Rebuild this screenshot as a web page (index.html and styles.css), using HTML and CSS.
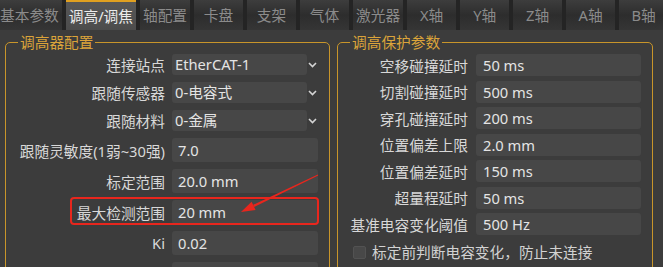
FILE: index.html
```html
<!DOCTYPE html>
<html lang="zh-CN">
<head>
    <meta charset="UTF-8">
    <meta name="viewport" content="width=device-width, initial-scale=1.0">
    <title>调高/调焦</title>
    <link rel="stylesheet" href="styles.css">
</head>
<body>

<div class="tabs">
    <div class="tab">基本参数</div>
    <div class="tab active">调高/调焦</div>
    <div class="tab">轴配置</div>
    <div class="tab">卡盘</div>
    <div class="tab">支架</div>
    <div class="tab">气体</div>
    <div class="tab">激光器</div>
    <div class="tab">X轴</div>
    <div class="tab">Y轴</div>
    <div class="tab">Z轴</div>
    <div class="tab">A轴</div>
    <div class="tab">B轴</div>
</div>

<div class="panels">
    <fieldset class="group group-left">
        <legend>调高器配置</legend>
        <div class="form form-left">
            <div class="row">
                <label>连接站点</label>
                <div class="combo">
                    <span class="combo-field">EtherCAT-1</span>
                    <svg class="chevron" width="11" height="21" viewBox="0 0 11 21"><path d="M2 9 L5.5 12.5 L9 9" fill="none" stroke="#d4d4d4" stroke-width="1.6"/></svg>
                </div>
            </div>
            <div class="row">
                <label>跟随传感器</label>
                <div class="combo">
                    <span class="combo-field">0-电容式</span>
                    <svg class="chevron" width="11" height="21" viewBox="0 0 11 21"><path d="M2 9 L5.5 12.5 L9 9" fill="none" stroke="#d4d4d4" stroke-width="1.6"/></svg>
                </div>
            </div>
            <div class="row">
                <label>跟随材料</label>
                <div class="combo">
                    <span class="combo-field">0-金属</span>
                    <svg class="chevron" width="11" height="21" viewBox="0 0 11 21"><path d="M2 9 L5.5 12.5 L9 9" fill="none" stroke="#d4d4d4" stroke-width="1.6"/></svg>
                </div>
            </div>
            <div class="row">
                <label>跟随灵敏度(1弱~30强)</label>
                <div class="field">7.0</div>
            </div>
            <div class="row">
                <label>标定范围</label>
                <div class="field">20.0 mm</div>
            </div>
            <div class="row">
                <label>最大检测范围</label>
                <div class="field">20 mm</div>
                <span class="highlight"></span>
            </div>
            <div class="row">
                <label>Ki</label>
                <div class="field">0.02</div>
            </div>
            <div class="row">
                <label></label>
                <div class="field"></div>
            </div>
        </div>
    </fieldset>

    <fieldset class="group group-right">
        <legend>调高保护参数</legend>
        <div class="form form-right">
            <div class="row"><label>空移碰撞延时</label><div class="field">50 ms</div></div>
            <div class="row"><label>切割碰撞延时</label><div class="field">500 ms</div></div>
            <div class="row"><label>穿孔碰撞延时</label><div class="field">200 ms</div></div>
            <div class="row"><label>位置偏差上限</label><div class="field">2.0 mm</div></div>
            <div class="row"><label>位置偏差延时</label><div class="field">150 ms</div></div>
            <div class="row"><label>超量程延时</label><div class="field">50 ms</div></div>
            <div class="row"><label>基准电容变化阈值</label><div class="field">500 Hz</div></div>
        </div>
        <div class="check">
            <span class="check-box"></span>
            <span>标定前判断电容变化，防止未连接</span>
        </div>
    </fieldset>
</div>

<svg class="arrow" width="663" height="267" viewBox="0 0 663 267">
    <polygon points="254.1,207.0 253.1,204.8 317.8,174.6 318.2,175.4" fill="#e8261d"/>
    <polygon points="241,212 251.6,201.8 255.6,210.0" fill="#e8261d"/>
</svg>

</body>
</html>
```

FILE: styles.css
```css
body {
    margin: 0;
    height: 267px;
    overflow: hidden;
    background-color: #3c3c3c;
    font-family: "Noto Sans", "Noto Sans CJK SC", sans-serif;
    font-size: 14.7px;
    color: #d8d8d8;
}
.tabs {
    display: flex;
    gap: 4px;
    height: 30px;
    margin-left: -3px;
    background-color: #242424;
    overflow: hidden;
}
.tab {
    flex: none;
    box-sizing: border-box;
    min-width: 49px;
    padding: 0 3px;
    line-height: 30px;
    text-align: center;
    white-space: nowrap;
    color: #8b8b8b;
    background: linear-gradient(to bottom, #3d3d3d, #2d2d2d 50%, #353535);
}
.tab.active {
    color: #ececec;
    line-height: 28px;
    border-top: 2px solid #e0a020;
    background: linear-gradient(to bottom, #575757, #4c4c4c);
}
.panels {
    display: flex;
    gap: 7px;
    padding: 2px 0 0 5px;
}
.group {
    box-sizing: border-box;
    margin: 0;
    padding: 2px 11px 0 0;
    min-width: 0;
    border: 1px solid #c8952a;
    border-radius: 5px;
    height: 245px;
}
.group-left {
    width: 325px;
}
.group-right {
    width: 316px;
}
legend {
    margin-left: 12px;
    padding: 0 2px;
    line-height: 20px;
    color: #dba43a;
}
.form {
    display: flex;
    flex-direction: column;
    gap: 7px;
}
.row {
    display: grid;
    grid-template-columns: 159px 146px;
    column-gap: 7px;
    align-items: center;
    position: relative;
}
.form-right {
    gap: 4.5px;
}
.form-right .row {
    grid-template-columns: 130px 165px;
    column-gap: 8px;
}
label {
    text-align: right;
    white-space: nowrap;
}
.field {
    box-sizing: border-box;
    height: 24px;
    line-height: 24px;
    padding-left: 6px;
    border-radius: 3px;
    background-color: #474747;
    color: #e4e4e4;
    white-space: nowrap;
}
.form-right .field {
    height: 22px;
    line-height: 22px;
    padding-left: 7px;
}
.combo {
    display: flex;
    height: 21px;
}
.combo-field {
    flex: 1;
    line-height: 21px;
    padding-left: 3px;
    border-radius: 3px;
    background-color: #474747;
    color: #e4e4e4;
    white-space: nowrap;
}
.chevron {
    flex: none;
}
.highlight {
    position: absolute;
    left: 64px;
    right: -1px;
    top: -3px;
    bottom: -1px;
    border: 2px solid #e8261d;
    border-radius: 4px;
    pointer-events: none;
}
.check {
    display: flex;
    align-items: center;
    gap: 6px;
    margin-top: 7px;
    padding-left: 15px;
    line-height: 20px;
    color: #d2d2d2;
}
.check-box {
    box-sizing: border-box;
    width: 13px;
    height: 13px;
    border: 1px solid #525252;
    border-radius: 2px;
    background-color: #484848;
}
.arrow {
    position: absolute;
    left: 0;
    top: 0;
    pointer-events: none;
}
```
